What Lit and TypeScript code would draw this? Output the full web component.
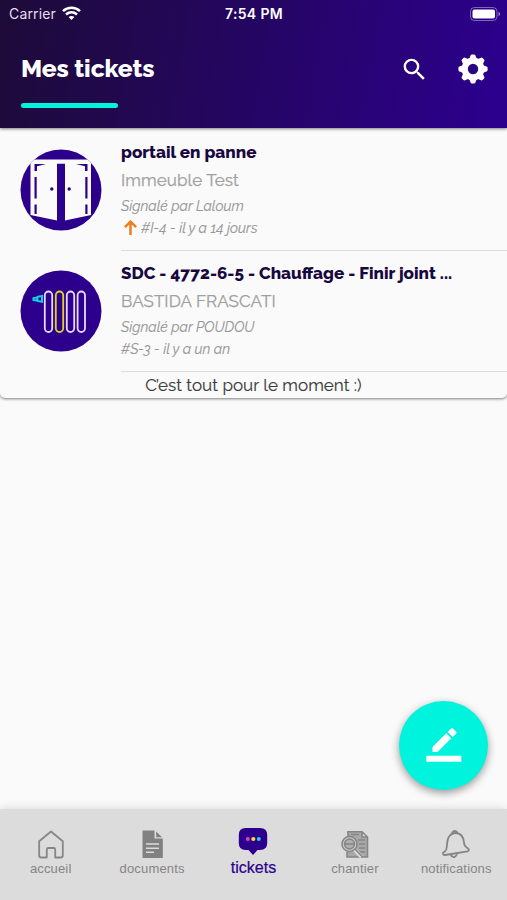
import { LitElement, html, css, svg } from "lit";
import { customElement, property } from "lit/decorators.js";

const wifi = svg`<svg width="19" height="15" viewBox="0 0 19 15">
  <g fill="none" stroke="#fff" stroke-width="2.5">
    <path d="M1 5.2C5.8 .7 13.2 .7 18 5.2"/><path d="M4 8.5C7.2 5.6 11.8 5.6 15 8.5"/>
  </g><path fill="#fff" d="M6.6 11C8.3 9.5 10.7 9.5 12.4 11L9.5 14Z"/></svg>`;

const battery = svg`<svg width="31" height="14" viewBox="0 0 31 14">
  <rect x=".5" y=".5" width="26.5" height="13" rx="4" fill="none" stroke="#fff" stroke-opacity=".4"/>
  <rect x="2.5" y="2.5" width="22.5" height="9" rx="2" fill="#fff"/>
  <path d="M28.5 4.8Q30.2 5.6 30.2 7T28.5 9.2Z" fill="#fff" fill-opacity=".5"/></svg>`;

const search = svg`<svg width="29" height="29" viewBox="0 0 24 24"><path fill="#fff" d="M15.5 14h-.79l-.28-.27A6.47 6.47 0 0 0 16 9.5 6.5 6.5 0 1 0 9.5 16c1.61 0 3.09-.59 4.23-1.57l.27.28v.79l5 4.99L20.49 19l-4.99-5zm-6 0C7.01 14 5 11.99 5 9.5S7.01 5 9.5 5 14 7.01 14 9.5 11.99 14 9.5 14z"/></svg>`;

const gear = svg`<svg width="30" height="30" viewBox="-15 -15 30 30">
  <g fill="#fff">${[0, 45, 90, 135].map(
    (a) => svg`<path transform="rotate(${a})" d="M-3.8-10L-2.4-13.6Q-2-14.6-1-14.6H1Q2-14.6 2.4-13.6L3.8-10V10L2.4 13.6Q2 14.6 1 14.6H-1Q-2 14.6-2.4 13.6L-3.8 10Z"/>`
  )}<circle r="11.4"/></g><circle r="5.2" fill="#290581"/></svg>`;

const gate = svg`<svg width="82" height="82" viewBox="0 0 82 82">
  <defs><clipPath id="disc"><circle cx="41" cy="41" r="40.5"/></clipPath></defs>
  <circle cx="41" cy="41" r="40.5" fill="#2c008c"/>
  <g clip-path="url(#disc)">
    <path fill="#fafafa" d="M0 10.5H82V14.5H71V66L45 71.5H37L10.5 66V14.5H0Z"/>
    <g fill="#2c008c">
      <path d="M37 14.8H45V72H37Z"/>
      <path d="M14.5 15H26L17 17.2V22H14.5ZM67.5 15H56L65 17.2V22H67.5Z"/>
      <path d="M14.5 28H16.7V49.5H14.5ZM65.3 28H67.5V49.5H65.3ZM14.5 55.5H16.7V65H14.5ZM65.3 55.5H67.5V65H65.3Z"/>
      <circle cx="31.8" cy="40" r="1.7"/><circle cx="49.2" cy="40" r="1.7"/>
    </g>
  </g></svg>`;

const radiator = svg`<svg width="82" height="82" viewBox="0 0 82 82">
  <circle cx="41" cy="41" r="40.5" fill="#2c008c"/>
  <g fill="none" stroke="#e9d8fb" stroke-width="1.8">
    <rect x="24.8" y="21.5" width="7.4" height="40.5" rx="3.7"/>
    <rect x="35.8" y="21.5" width="7.4" height="40.5" rx="3.7" stroke="#e3d12d"/>
    <rect x="46.8" y="21.5" width="7.4" height="40.5" rx="3.7"/>
    <rect x="57.6" y="21.5" width="7.4" height="40.5" rx="3.7"/>
    <path stroke="#16cfe0" stroke-width="2" d="M22 25.9L17.5 26.8V31L22 31.8ZM17.5 27.4L13.5 28V30L17.5 30.4"/>
  </g></svg>`;

const arrow = svg`<svg width="13" height="15" viewBox="0 0 13 15"><path fill="none" stroke="#ee7d1e" stroke-width="2.5" d="M6.5 15V1.8M.9 7.1L6.5 1.6L12.1 7.1"/></svg>`;

const pencil = svg`<svg width="36" height="36" viewBox="0 0 36 36"><path fill="#fff" d="M.3 28.7H35.3V34.8H.3ZM6.5 25V20L20.2 6.3L25.2 11.3L11.5 25ZM21.6 4.9L24.8 1.7Q26 .5 27.3 1.7L30 4.4Q31.2 5.6 30 6.9L26.7 10Z"/></svg>`;

const house = svg`<svg width="28" height="30" viewBox="0 0 28 30"><path fill="none" stroke="#868686" stroke-width="1.8" stroke-linejoin="round" d="M14 1.5L2.2 11.3V25.5Q2.2 27.5 4.2 27.5H9.8V19.5Q9.8 18 11.2 18H16.8Q18.2 18 18.2 19.5V27.5H23.8Q25.8 27.5 25.8 25.5V11.3Z"/></svg>`;

const sheet = svg`<svg width="22" height="30" viewBox="0 0 22 30"><path fill="#818181" d="M1.5 .5H13.5V8.5H21.8V28H1.5ZM15.2 1.6L21 7.2H15.2Z"/><path stroke="#dcdcdc" stroke-width="1.5" d="M5 14H18M5 18.3H18M5 22.3H13"/></svg>`;

const chat = svg`<svg width="30" height="30" viewBox="0 0 30 30"><path fill="#2c008c" d="M7.5 0H22Q29.2 0 29.2 7V15Q29.2 22 22 22H19.5L15 27L10.5 22H7.5Q.8 22 .8 15V7Q.8 0 7.5 0Z"/><circle cx="9.8" cy="11" r="2" fill="#e53bd6"/><circle cx="15.3" cy="11" r="2.1" fill="#f7dd35"/><circle cx="20.8" cy="11" r="2" fill="#22cff0"/></svg>`;

const site = svg`<svg width="30" height="30" viewBox="0 0 30 30"><g fill="none" stroke="#858585" stroke-width="1.6">
  <path fill="#a8a8a8" d="M8 6V1.7H22L27.5 7V27H7V22M22 2V7H27"/>
  <path d="M18 10H25M19 14H25M19 18H25M20 22H25M11 4.5H19"/>
  <circle cx="9.5" cy="14" r="7.5" fill="#cfcfcf"/><circle cx="9.5" cy="14" r="4.9" fill="#b0b0b0"/><path d="M5 14H14"/>
  <path stroke="#dcdcdc" stroke-width="4" d="M15 20L21.5 27"/><path d="M15 19L22.5 27"/></g></svg>`;

const bell = svg`<svg width="30" height="30" viewBox="0 0 30 30"><g fill="none" stroke="#858585" stroke-width="1.8" stroke-linejoin="round">
  <path d="M5.2 19.5C7 14 5 10 8.5 6Q11 3 14.2 3C20 3 22.5 7 23 12.5Q23.2 16.5 27.3 18.6Q28.5 20.5 26.5 21.4L4 25Q1.5 25 2.2 22.5Q4.4 21.5 5.2 19.5Z"/>
  <path d="M11 3.4Q12 .8 13.8 1Q15.8 1.1 16.6 3.4M9.5 24.5Q11 27.6 13.5 27Q15.4 26.5 16 23.6"/></g></svg>`;

@customElement("ticket-row")
class TicketRow extends LitElement {
  @property({ attribute: false }) ticket: any;
  static styles = css`
    :host { display: grid; grid-template-columns: 121px 1fr; height: 121px; box-sizing: border-box; }
    .avatar { padding: 19px 0 0 20px; }
    svg { display: block; }
    .body { border-bottom: 1px solid #dcdcde; padding-top: 10px; min-width: 0; white-space: nowrap; }
    .title { font: 800 17.05px/24px Raleway, Lato, sans-serif; color: #18083f; }
    .place { font: 400 17px/24px Raleway, Lato, sans-serif; color: #a0a0a0; margin-top: 4px; letter-spacing: .08px; -webkit-text-stroke: .25px #a0a0a0; }
    .by, .meta { font: italic 400 14px/22px Raleway, Lato, sans-serif; color: #979797; -webkit-text-stroke: .15px #979797; }
    .by { margin-top: 2.5px; }
    .meta { display: flex; align-items: center; }
    .flag { margin: 0 4px 0 3px; }
  `;
  render() {
    const t = this.ticket;
    return html`<div class="avatar">${t.icon}</div>
      <div class="body">
        <div class="title">${t.title}</div>
        <div class="place">${t.place}</div>
        <div class="by">${t.by}</div>
        <div class="meta">${t.urgent ? html`<span class="flag">${arrow}</span>` : ""}<span>${t.meta}</span></div>
      </div>`;
  }
}

@customElement("app-root")
class AppRoot extends LitElement {
  static styles = css`
    :host { display: flex; flex-direction: column; height: 900px; background: #fafafa; font-family: Raleway, Lato, sans-serif; overflow: hidden; position: relative; }
    svg { display: block; }
    header { height: 128px; flex: none; background: linear-gradient(100deg, #1d0b38 0%, #2c008c 97%); color: #fff; box-shadow: 0 1px 3px rgba(0,0,0,.5); z-index: 1; }
    .status { display: grid; grid-template-columns: 1fr auto 1fr; height: 27px; align-items: center; font: 14px/27px Inter, sans-serif; padding: 0 6px 0 9px; }
    .carrier { display: flex; gap: 6px; align-items: center; color: #e5dff0; letter-spacing: .15px; }
    .time { font-weight: 600; letter-spacing: .35px; position: relative; left: -1px; }
    .battery { justify-self: end; }
    .bar { display: flex; align-items: center; height: 60px; padding: 12px 19px 0 21px; box-sizing: border-box; margin-top: 6px; }
    h1 { flex: 1; margin: 0; font-size: 24.6px; font-weight: 800; line-height: 30px; letter-spacing: -.1px; }
    .tool { margin-left: 29px; }
    .line { width: 97px; height: 5px; border-radius: 3px; background: #00f3dc; margin: 10px 0 0 21px; }
    .card { flex: none; height: 270px; padding-top: 2px; box-sizing: border-box; border-radius: 0 0 5px 5px; box-shadow: 0 1px 3px rgba(0,0,0,.5); }
    .end { text-align: center; font-size: 17px; line-height: 26px; color: #3b3b3b; letter-spacing: .05px; -webkit-text-stroke: .15px #3b3b3b; }
    .fab { position: absolute; left: 399px; top: 700.5px; width: 89px; height: 89px; border-radius: 50%; background: #00f3dc; display: grid; place-items: center; box-shadow: 0 3px 8px rgba(0,0,0,.4); }
    nav { margin-top: auto; height: 91px; background: #dcdcdc; box-shadow: 0 -2px 8px rgba(0,0,0,.1); display: grid; grid-template-columns: repeat(5, 1fr); color: #858585; font: 13px/18px "Liberation Sans", sans-serif; }
    .tab { display: flex; flex-direction: column; align-items: center; padding-top: 21px; }
    .label { letter-spacing: .15px; }
    .on { padding-top: 19px; color: #2c008c; font-size: 16px; }
    .on .label { margin-top: 1px; letter-spacing: 0; -webkit-text-stroke: .2px #2c008c; }
  `;
  tickets = [
    { icon: gate, title: "portail en panne", place: "Immeuble Test", by: "Signalé par Laloum", meta: "#I-4 - il y a 14 jours", urgent: true },
    { icon: radiator, title: "SDC - 4772-6-5 - Chauffage - Finir joint ...", place: "BASTIDA FRASCATI", by: "Signalé par POUDOU", meta: "#S-3 - il y a un an", urgent: false },
  ];
  tabs = [
    [house, "accueil"],
    [sheet, "documents"],
    [chat, "tickets"],
    [site, "chantier"],
    [bell, "notifications"],
  ];
  render() {
    return html`
      <header>
        <div class="status">
          <div class="carrier"><span>Carrier</span>${wifi}</div>
          <div class="time">7:54 PM</div>
          <div class="battery">${battery}</div>
        </div>
        <div class="bar"><h1>Mes tickets</h1><span class="tool">${search}</span><span class="tool">${gear}</span></div>
        <div class="line"></div>
      </header>
      <main class="card">
        ${this.tickets.map((t) => html`<ticket-row .ticket=${t}></ticket-row>`)}
        <div class="end">C’est tout pour le moment :)</div>
      </main>
      <div class="fab">${pencil}</div>
      <nav>${this.tabs.map(([icon, label]) => html`<div class="tab ${label === "tickets" ? "on" : ""}">${icon}<span class="label">${label}</span></div>`)}</nav>
    `;
  }
}
